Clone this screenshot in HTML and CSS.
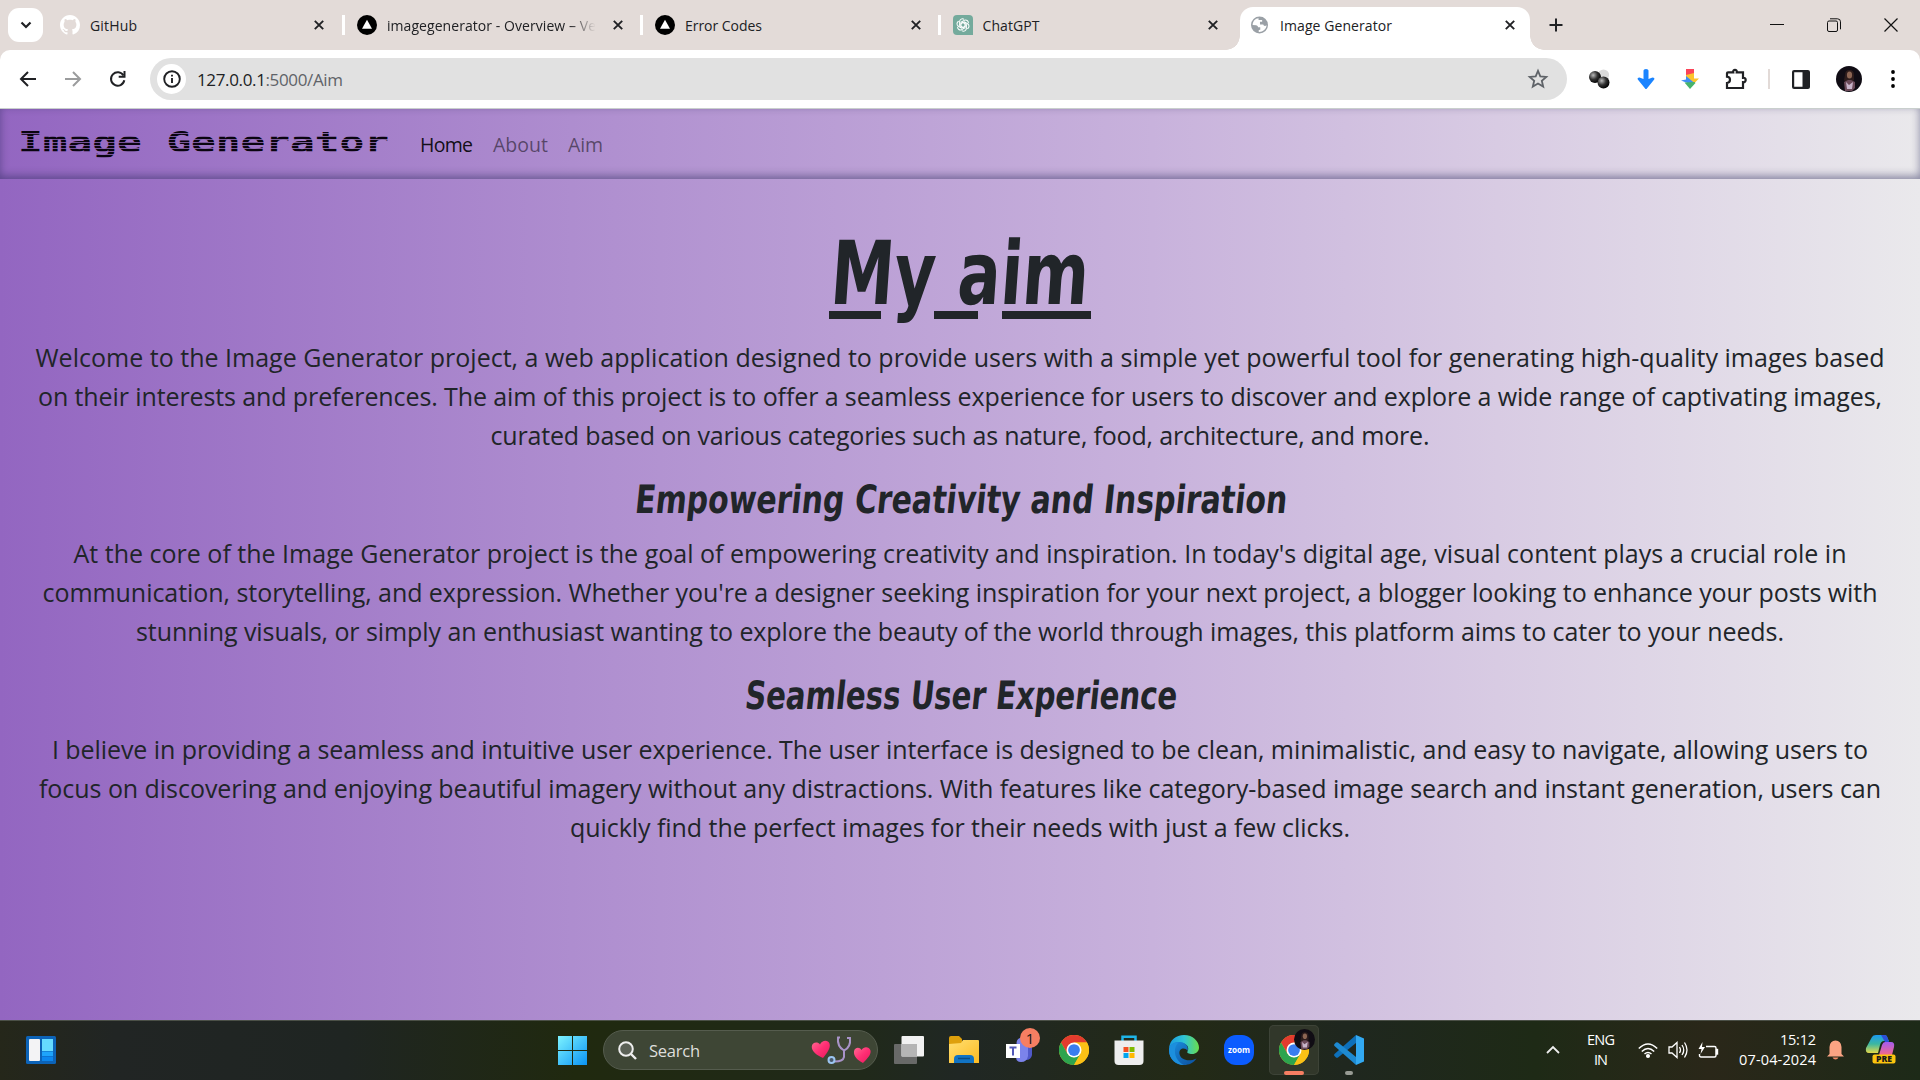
FILE: index.html
```html
<!DOCTYPE html>
<html lang="en">
<head>
<meta charset="utf-8">
<title>Image Generator</title>
<link rel="stylesheet" href="styles.css">
</head>
<body>
<svg width="0" height="0" class="defs">
  <defs>
    <pattern id="scan" width="8" height="3" patternUnits="userSpaceOnUse"><rect width="8" height="2" fill="#0a0510"/><rect y="2" width="8" height="1" fill="#0a0510" opacity=".25"/></pattern>
    <linearGradient id="win" x1="0" y1="0" x2="1" y2="1"><stop offset="0" stop-color="#7df3ff"/><stop offset="1" stop-color="#0a93f5"/></linearGradient>
    <linearGradient id="folder" x1="0" y1="0" x2="1" y2="1"><stop offset="0" stop-color="#ffdf72"/><stop offset="1" stop-color="#fdbb22"/></linearGradient>
    <linearGradient id="edgeA" x1="0" y1="0" x2="1" y2="0"><stop offset="0" stop-color="#1a9ae0"/><stop offset=".5" stop-color="#2fc4d6"/><stop offset="1" stop-color="#6ade4c"/></linearGradient>
    <linearGradient id="edgeB" x1="0" y1="0" x2="1" y2="1"><stop offset="0" stop-color="#1b8fdf"/><stop offset="1" stop-color="#0b4f9f"/></linearGradient>
    <linearGradient id="copA" x1="0" y1="0" x2="0" y2="1"><stop offset="0" stop-color="#1b9af0"/><stop offset=".5" stop-color="#3cb7a0"/><stop offset="1" stop-color="#e3d84a"/></linearGradient>
    <linearGradient id="copB" x1="0" y1="0" x2="0" y2="1"><stop offset="0" stop-color="#a45cf0"/><stop offset="1" stop-color="#f5688a"/></linearGradient>
    <linearGradient id="heart" x1="0" y1="0" x2="1" y2="1"><stop offset="0" stop-color="#ff6a92"/><stop offset=".5" stop-color="#ff2e74"/><stop offset="1" stop-color="#e81a5c"/></linearGradient>
    <radialGradient id="ball" cx=".35" cy=".35" r=".65"><stop offset="0" stop-color="#bbb"/><stop offset=".55" stop-color="#333"/><stop offset="1" stop-color="#050505"/></radialGradient>
    <symbol id="x" viewBox="0 0 12 12"><path d="M1.8 1.8l8.4 8.4M10.2 1.8l-8.4 8.4" stroke="#202124" stroke-width="1.9" fill="none"/></symbol>
    <symbol id="vercel" viewBox="0 0 20 20"><circle cx="10" cy="10" r="10"/><path d="M10 4.800l5 9H5z" fill="#fff"/></symbol>
    <symbol id="chrome" viewBox="0 0 48 48">
      <circle cx="24" cy="24" r="24" fill="#fbc116"/>
      <path d="M3.2 12A24 24 0 0 1 44.8 12H24L13.6 30z" fill="#e33b2e"/>
      <path d="M3.2 12A24 24 0 0 0 24 48L34.4 30 24 36 13.6 30z" fill="#2da44e"/>
      <path d="M44.8 12A24 24 0 0 1 24 48L34.4 30 34 18 24 12z" fill="#fbc116"/>
      <circle cx="24" cy="24" r="12" fill="#fff"/><circle cx="24" cy="24" r="9.4" fill="#3a7df0"/>
    </symbol>
    <symbol id="face" viewBox="0 0 26 26"><circle cx="13" cy="13" r="13" fill="#100c14"/><path d="M9 9q0-5 4.500-5t4.500 5v5l-2 3H10l-2-3z" fill="#2d1c1c"/><ellipse cx="13.500" cy="9" rx="2.600" ry="3.500" fill="#8c6553"/><path d="M8 16l4-2h3l4 2v6l-3 3H9z" fill="#6b4a59"/><path d="M10 16l3 3 4-3-1 7h-5z" fill="#c7b3c9"/></symbol>
  </defs>
</svg>

<header class="tabs">
  <div class="tab-search"><svg width="12" height="8" viewBox="0 0 12 8"><path d="M1.500 1.500L6 6l4.500-4.500" stroke="#202124" stroke-width="2.200" fill="none"/></svg></div>
  <div class="tab">
    <svg class="fav" viewBox="0 0 16 16"><path fill="#fff" d="M8 0C3.580 0 0 3.580 0 8c0 3.540 2.290 6.530 5.470 7.590.4.070.55-.17.55-.38 0-.19-.01-.82-.01-1.490-2.010.37-2.530-.49-2.690-.94-.09-.23-.48-.94-.82-1.130-.28-.15-.68-.52-.01-.53.63-.01 1.080.58 1.230.82.72 1.210 1.870.87 2.330.66.070-.52.28-.87.510-1.070-1.780-.2-3.640-.89-3.640-3.950 0-.87.310-1.590.82-2.150-.08-.2-.36-1.020.08-2.120 0 0 .67-.21 2.200.82.640-.18 1.320-.27 2-.27s1.360.09 2 .27c1.530-1.040 2.200-.82 2.200-.82.440 1.100.160 1.920.080 2.120.510.560.820 1.270.820 2.150 0 3.070-1.870 3.750-3.650 3.950.290.250.540.730.540 1.480 0 1.070-.01 1.930-.01 2.200 0 .21.150.460.550.380A8 8 0 0 0 16 8c0-4.420-3.580-8-8-8z"/></svg>
    <span class="tab-title"><span data-w="47">GitHub</span></span><svg class="close"><use href="#x"/></svg>
  </div>
  <div class="tab ruled">
    <svg class="fav"><use href="#vercel"/></svg>
    <span class="tab-title fade"><span data-w="209">imagegenerator - Overview – Ve</span></span><svg class="close"><use href="#x"/></svg>
  </div>
  <div class="tab ruled">
    <svg class="fav"><use href="#vercel"/></svg>
    <span class="tab-title"><span data-w="77">Error Codes</span></span><svg class="close"><use href="#x"/></svg>
  </div>
  <div class="tab ruled">
    <svg class="fav" viewBox="0 0 20 20"><path d="M4 0h12a4 4 0 0 1 4 4v16H4a4 4 0 0 1-4-4V4a4 4 0 0 1 4-4z" fill="#74aa9c"/><g fill="none" stroke="#fff" stroke-width="1.050"><path id="petal" d="M8 12.800V7.300l3.200-1.900a2.800 2.800 0 0 1 4.200 2.800"/><use href="#petal" transform="rotate(60 10 10)"/><use href="#petal" transform="rotate(120 10 10)"/><use href="#petal" transform="rotate(180 10 10)"/><use href="#petal" transform="rotate(240 10 10)"/><use href="#petal" transform="rotate(300 10 10)"/></g></svg>
    <span class="tab-title"><span data-w="57">ChatGPT</span></span><svg class="close"><use href="#x"/></svg>
  </div>
  <div class="tab active">
    <svg class="fav globe" viewBox="0 0 18 18"><circle cx="9" cy="9" r="9" fill="#9aa0a6"/><path d="M8 1.800C4.500 2 1.800 5 1.700 9l3.800.2q2 .2 2 2.300h2.300V14l-1.600.3v2c4.300.2 8-2.800 8.300-7-1.500 1.200-3.300.8-3.500-.8H9.500V5.500h2.300V3.800H8z" fill="#fff"/></svg>
    <span class="tab-title"><span data-w="112">Image Generator</span></span><svg class="close"><use href="#x"/></svg>
  </div>
  <svg class="plus" width="14" height="14" viewBox="0 0 14 14"><path d="M7 .5v13M.5 7h13" stroke="#202124" stroke-width="2"/></svg>
  <div class="window-buttons">
    <svg width="14" height="14"><path d="M0 6.500h14" stroke="#111"/></svg>
    <svg width="14" height="14" fill="none" stroke="#111"><rect x=".5" y="3" width="10" height="10.500" rx="1.500"/><path d="M3 .8h7.500a3 3 0 0 1 3 3v7.500"/></svg>
    <svg width="14" height="14" stroke="#111" stroke-width="1.200"><path d="M.5.5l13 13M13.500.5l-13 13"/></svg>
  </div>
</header>

<div class="toolbar">
  <div class="nav-icons">
    <svg width="18" height="18" viewBox="0 0 18 18" fill="none" stroke="#202124" stroke-width="2"><path d="M17 9H2.500M9 2L2 9l7 7"/></svg>
    <svg width="18" height="18" viewBox="0 0 18 18" fill="none" stroke="#9b9c9d" stroke-width="2"><path d="M1 9h14.500M9 2l7 7-7 7"/></svg>
    <svg width="18" height="18" viewBox="0 0 18 18" fill="none" stroke="#202124" stroke-width="2"><path d="M14.500 5.600A6.700 6.700 0 1 0 15.300 10.300"/><path d="M15.500 1v5.800H9.700"/></svg>
  </div>
  <div class="omnibox">
    <div class="site-info"><svg width="18" height="18" viewBox="0 0 18 18" fill="none" stroke="#202124" stroke-width="1.900"><circle cx="9" cy="9" r="7.800"/><path d="M9 8v5M9 4.700v1.900"/></svg></div>
    <span class="url" data-w="146">127.0.0.1<i>:5000/Aim</i></span>
    <svg class="star" width="20" height="20" viewBox="0 0 20 20"><path d="M10 1.900l2.300 5.500 6 .5-4.500 3.900 1.400 5.800-5.200-3.100-5.200 3.100 1.400-5.800L1.700 7.900l6-.5z" fill="none" stroke="#5f6368" stroke-width="1.800"/></svg>
  </div>
  <div class="extensions">
    <svg width="22" height="20" viewBox="0 0 22 20"><circle cx="14.500" cy="6" r="5.600" fill="#d9d9d9"/><circle cx="6" cy="8" r="6" fill="url(#ball)"/><circle cx="14.500" cy="13.500" r="6" fill="url(#ball)"/></svg>
    <svg width="18" height="20" viewBox="0 0 18 20"><path d="M6.500 1.500q0-1.500 2.500-1.500t2.500 1.500V10l4-1.500q2.500 0 1.700 2L9.500 20h-1L.8 10.500q-.8-2 1.700-2l4 1.500z" fill="#1b84ff"/></svg>
    <svg width="18" height="20" viewBox="0 0 18 20"><path d="M5 0h8v5l-8 2z" fill="#fb4458"/><path d="M5 6l8-2v5.500h5L13.500 14 5 9z" fill="#fcc42c"/><path d="M5 7l8.500 7L9 15 0 11.500l5-1z" fill="#3f8df5"/><path d="M3.500 13.500L13.500 13l1 1L9 20z" fill="#47b36b"/></svg>
    <svg width="22" height="22" viewBox="0 0 22 22"><path d="M3 4.300h5.200C7.500 1 12.500 1 11.800 4.300H18v5.500c3.600-.5 3.600 4.900 0 4.400V20H2v-5c4-.4 4-6 0-6.300V5.300q0-1 1-1z" fill="none" stroke="#202124" stroke-width="2.200"/></svg>
    <b></b>
    <svg width="18" height="19" viewBox="0 0 18 19"><rect x="1.100" y="1.100" width="15.800" height="16.800" rx="1" fill="none" stroke="#202124" stroke-width="2.200"/><path d="M10.500 1h6.500v17h-6.500z" fill="#202124"/></svg>
    <svg width="26" height="26"><use href="#face"/></svg>
    <svg width="4" height="18" viewBox="0 0 4 18"><circle cx="2" cy="2" r="1.900"/><circle cx="2" cy="9" r="1.900"/><circle cx="2" cy="16" r="1.900"/></svg>
  </div>
</div>

<div class="page">
  <nav class="navbar">
    <svg class="brand" width="376" height="50"><text x="-1" y="33" textLength="371" lengthAdjust="spacingAndGlyphs" fill="url(#scan)">Image Generator</text></svg>
    <div class="links"><div class="on"><a data-w="53">Home</a></div><div><a data-w="55">About</a></div><div><a data-w="35">Aim</a></div></div>
  </nav>
  <main>
    <svg class="title" width="300" height="159" viewBox="-15 0 300 159">
      <text transform="translate(4 125) skewX(-4)" textLength="258" lengthAdjust="spacingAndGlyphs">My aim</text>
      <path d="M4 132h52v8H4zM109 132h44v8h-44zM177 132h89v8h-89z" fill="#212529"/>
    </svg>
    <p><span data-w="1849">Welcome to the Image Generator project, a web application designed to provide users with a simple yet powerful tool for generating high-quality images based</span>
    <span data-w="1844">on their interests and preferences. The aim of this project is to offer a seamless experience for users to discover and explore a wide range of captivating images,</span>
    <span data-w="939">curated based on various categories such as nature, food, architecture, and more.</span></p>
    <svg class="sub" width="700" height="78"><text transform="translate(24 57) skewX(-6)" textLength="652" lengthAdjust="spacingAndGlyphs">Empowering Creativity and Inspiration</text></svg>
    <p><span data-w="1773">At the core of the Image Generator project is the goal of empowering creativity and inspiration. In today's digital age, visual content plays a crucial role in</span>
    <span data-w="1835">communication, storytelling, and expression. Whether you're a designer seeking inspiration for your next project, a blogger looking to enhance your posts with</span>
    <span data-w="1648">stunning visuals, or simply an enthusiast wanting to explore the beauty of the world through images, this platform aims to cater to your needs.</span></p>
    <svg class="sub" width="700" height="78"><text transform="translate(134 57) skewX(-6)" textLength="432" lengthAdjust="spacingAndGlyphs">Seamless User Experience</text></svg>
    <p><span data-w="1816">I believe in providing a seamless and intuitive user experience. The user interface is designed to be clean, minimalistic, and easy to navigate, allowing users to</span>
    <span data-w="1842">focus on discovering and enjoying beautiful imagery without any distractions. With features like category-based image search and instant generation, users can</span>
    <span data-w="780">quickly find the perfect images for their needs with just a few clicks.</span></p>
  </main>
</div>

<footer class="taskbar">
  <div class="widgets"><svg width="30" height="28" viewBox="0 0 30 28"><rect width="30" height="28" rx="1.500" fill="#0c63b8"/><rect x="3" y="3" width="11" height="22" rx="1" fill="#f3f3f5"/><path d="M16 3h11v12H16z" fill="#66dbff"/><path d="M16 15.500h11v4.500H16z" fill="#1ea4fb"/><path d="M16 20.500h11V25H16z" fill="#0c86ee"/></svg></div>
  <div class="apps">
    <svg class="start" width="29" height="29"><path d="M0 0h14v14H0zM15 0h14v14H15zM0 15h14v14H0zM15 15h14v14H15z" fill="url(#win)"/></svg>
    <div class="search">
      <svg width="19" height="19" viewBox="0 0 19 19"><circle cx="8" cy="8" r="6.800" fill="#5b6156" stroke="#eee" stroke-width="2"/><path d="M13 13l5 5" stroke="#eee" stroke-width="2.400"/></svg>
      <div class="search-label"><span data-w="51">Search</span></div>
      <svg width="62" height="30" viewBox="0 0 62 30"><path d="M12 23C5 20 .5 16 .8 11.500 1 7.500 6.500 6 9 9.500 11 5 17 4.500 18.500 8.500 20 13 16 18 12 23z" fill="url(#heart)"/><path d="M52 28C46 25 42.500 21 43 16.500c.5-4 5.500-5 7.500-1.500C53 11 58 11.500 59.500 15.500 60.500 19.500 56 24 52 28z" fill="url(#heart)"/><path d="M29 2.500h-2q-1 9 6 13 7-3 6-12.500h-3M33 15v7q-1 4.500-9 4.500" fill="none" stroke="#a893c8" stroke-width="2"/><circle cx="20.500" cy="25" r="3" fill="#48586a" stroke="#9cc6f2" stroke-width="2"/></svg>
    </div>
    <div class="icons">
      <div><svg width="30" height="28"><rect x="0" y="8" width="23" height="20" rx="1" fill="#686968"/><rect x="7.500" width="22.500" height="20.500" rx="1" fill="#f2f2f2"/><rect x="7.500" y="8" width="15.500" height="12.500" fill="#b5b5b5"/></svg></div>
      <div><svg width="30" height="28"><path d="M0 2q0-2 2-2h8l3 3v6H0z" fill="#dea00c"/><path d="M0 8l12-1 2-3h15q1 0 1 1v22H0z" fill="url(#folder)"/><path d="M5 27v-4q0-4 4-4h12q4 0 4 4v4z" fill="#1173c4"/><path d="M9 22.500h12" stroke="#0b4c85" stroke-width="1.500"/></svg></div>
      <div class="badge"><svg width="30" height="30" viewBox="0 0 30 30"><circle cx="18" cy="8" r="5.500" fill="#7b83eb"/><path d="M20 10h8v10q-1 5-6 5z" fill="#5059c9"/><path d="M12 10h12v11q-1 6-7 6-5 0-5-5z" fill="#7b83eb"/><rect x="2" y="9" width="14" height="14" fill="#fff"/><path d="M5.500 12.500h7M9 12.500v8" stroke="#5158b8" stroke-width="2"/></svg><span>1</span></div>
      <div><svg width="30" height="30"><use href="#chrome"/></svg></div>
      <div><svg width="30" height="30"><path d="M8.500 6V1.800h13V6" fill="none" stroke="#1eb5e8" stroke-width="2.500"/><path d="M.5 5.500h29V26q0 4-4 4h-21q-4 0-4-4z" fill="#eee"/><path fill="#f25022" d="M9.500 12h5v5h-5z"/><path fill="#7fba00" d="M15.500 12h5v5h-5z"/><path fill="#00a4ef" d="M9.500 18h5v5h-5z"/><path fill="#ffb900" d="M15.500 18h5v5h-5z"/></svg></div>
      <div><svg width="30" height="30" viewBox="0 0 30 30"><path d="M0 13C1 5 7 0 15 0c9 0 15 6.500 15 12.500 0 4-3 6.500-7 6.500-3 0-5.500-1-4.500-2.500C21 12 17 8 12 8 6 8 1.500 10 0 13z" fill="url(#edgeA)"/><path d="M0 15C0 9 6 6.500 11 7c6 .5 9 5 7.500 9-2-4-9-3-8 3 .8 5.500 9 8.500 17 4.500C24.500 28 20 30 15 30 7 30 0 24 0 15z" fill="url(#edgeB)"/><path d="M0 15C0 9 6 7 10 7.500 4 11 4 25 15 30 7 30 0 24 0 15z" fill="#1c8fdd"/></svg></div>
      <div><svg width="30" height="30"><rect width="30" height="30" rx="12" fill="#0b5cff"/><text x="4" y="18" textLength="22" lengthAdjust="spacingAndGlyphs" class="zoom">zoom</text></svg></div>
      <div class="current"><svg width="30" height="30"><use href="#chrome"/></svg><svg class="who" width="21" height="21"><use href="#face"/></svg></div>
      <div class="open"><svg width="30" height="30" viewBox="0 0 30 30"><path d="M22 0l8 3.500v23L22 30z" fill="#32a9f2"/><path d="M22 0v8L4 22.500q-1 .5-2 0L.5 21q-1-1 0-2z" fill="#0e70ba"/><path d="M22 30v-8L4 7.500q-1-.5-2 0L.5 9q-1 1 0 2z" fill="#1e8ad2"/></svg></div>
    </div>
  </div>
  <div class="tray">
    <svg class="chev" width="14" height="8"><path d="M1 7l6-6 6 6" fill="none" stroke="#eee" stroke-width="1.800"/></svg>
    <div class="lang"><span data-w="28">ENG</span><span data-w="14">IN</span></div>
    <div class="status">
      <svg width="20" height="15" viewBox="0 0 20 15" fill="none" stroke="#fff" stroke-width="1.500"><path d="M.8 5.500Q10-3.500 19.200 5.500M3.800 8.500q6.200-6 12.400 0M6.500 11q3.500-3 7 0"/><circle cx="10" cy="13" r="1.300" fill="#fff"/></svg>
      <svg width="20" height="18" viewBox="0 0 20 18" fill="none" stroke="#fff" stroke-width="1.300"><path d="M1 6h3l5-4.500v15L4 12H1zM11.500 6q2 3 0 6M14 4q3.500 5 0 10M16.500 1.500q5 7.500 0 15"/></svg>
      <svg width="21" height="17" viewBox="0 0 21 17" fill="none" stroke="#fff" stroke-width="1.400"><path d="M8 4.500h8.500q1.500 0 1.500 1.500v7.500q0 1.500-1.500 1.500H3q-1.500 0-1.500-1.500V12"/><path d="M18.500 7.500h1v4.500h-1z" fill="#fff"/><path d="M4.500 0L.5 7h3l-1 5L7 5H4z" fill="#fff" stroke="none"/></svg>
    </div>
    <div class="clock"><span data-w="36">15:12</span><span data-w="77">07-04-2024</span></div>
    <svg class="bell" width="17" height="20" viewBox="0 0 17 20"><path d="M2.500 14V7q.5-6.500 6-6.500t6 6.500v7l2.500 2.500H0z" fill="#fba483"/><path d="M5.500 17.500h6q-1 2-3 2t-3-2z" fill="#f28b66"/></svg>
    <svg class="copilot" width="30" height="30" viewBox="0 0 30 30"><path d="M6 2q1-2 4-2h8q3 0 3.500 3L23 6h-5q-3 0-4 4l-2 8H3q-4 0-3-5z" fill="url(#copA)"/><path d="M15 0h4q2 0 3 4l1 3h-4z" fill="#2c50d8"/><path d="M19 7h6q4 0 3 5l-2 8H13l3-10q1-3 3-3z" fill="url(#copB)"/><rect x="6.500" y="19.500" width="23" height="9" rx="2" fill="#fcc40e"/><text x="10" y="27.300" textLength="16" lengthAdjust="spacingAndGlyphs" class="pre">PRE</text></svg>
  </div>
</footer>
<script src="fit.js"></script>
</body>
</html>
```
FILE: styles.css
```css
* { box-sizing: border-box; }
body { margin: 0; width: 1920px; height: 1080px; overflow: hidden; display: flex; flex-direction: column; background: #e3dbd8; font-family: "Open Sans", "Noto Sans", sans-serif; color: #202124; }
svg { display: block; flex: none; overflow: visible; }
.defs { position: absolute; }
[data-w] { white-space: nowrap; display: inline-block; }

.tabs { height: 50px; flex: none; display: flex; align-items: center; padding-left: 8px; font-size: 14px; }
.tab-search { width: 35px; height: 34px; border-radius: 11px; background: #fff; display: grid; place-items: center; }
.tab { position: relative; width: 298px; height: 43px; margin-top: 7px; padding: 0 15px 7px 16px; display: flex; align-items: center; gap: 10px; flex: none; }
.tab:nth-child(2) { padding: 0 16px 7px 17px; }
.tab:nth-child(4), .tab:nth-child(5) { width: 297.500px; }
.ruled { background: linear-gradient(#fff, #fff) 1px 8px / 3px 20px no-repeat; }
.fav { width: 20px; height: 20px; }
.globe { width: 17px; height: 18px; }
.tab-title { flex: 1; overflow: hidden; white-space: nowrap; line-height: 22px; padding-top: 1px; }
.fade { -webkit-mask: linear-gradient(90deg, #000 85%, transparent 97%); mask: linear-gradient(90deg, #000 85%, transparent 97%); }
.close { width: 12px; height: 12px; }
.tab.active { width: 290px; background: #fff; border-radius: 13px 13px 0 0; margin-left: 6px; padding: 0 14px 7px 11px; gap: 12px; }
.tab.active::before, .tab.active::after { content: ""; position: absolute; bottom: 0; width: 14px; height: 14px; }
.tab.active::before { left: -14px; background: radial-gradient(circle at 0 0, transparent 13.500px, #fff 14px); }
.tab.active::after { right: -14px; background: radial-gradient(circle at 100% 0, transparent 13.500px, #fff 14px); }
.plus { margin-left: 19px; }
.window-buttons { margin-left: auto; padding-right: 22px; display: flex; gap: 43px; }

.toolbar { height: 59px; flex: none; background: #fff; border-radius: 10px 10px 0 0; border-bottom: 1px solid #c9cfcd; display: flex; align-items: center; }
.nav-icons { width: 150px; padding-left: 19px; display: flex; gap: 27px; }
.omnibox { width: 1417px; height: 42px; border-radius: 21px; background: #e1e1e1; display: flex; align-items: center; padding: 0 19px 0 7px; }
.site-info { width: 29px; height: 30px; border-radius: 50%; background: #fff; display: grid; place-items: center; }
.url { margin-left: 11px; font-size: 17px; }
.url i { font-style: normal; color: #5f6368; }
.star { margin-left: auto; }
.extensions { margin-left: 22px; display: flex; align-items: center; gap: 26px; }
.extensions b { width: 2px; height: 20px; background: #e2dad7; margin: 0 -4px 0 -5px; }
.extensions svg:nth-of-type(6) { margin-right: -2px; }
.extensions svg:nth-of-type(7) { margin-left: -2px; }
.extensions svg:last-child { margin-left: 5px; }

.page { height: 911px; flex: none; background: linear-gradient(90deg, #9366c1 0%, #b090d0 32%, #c8b2dc 60%, #d8cbe3 78%, #eae9ec 100%); color: #212529; }
.navbar { height: 70px; padding-left: 19px; display: flex; align-items: center; box-shadow: inset 0 -3px 9px rgba(40, 40, 90, .5); font-size: 19.500px; }
.brand { margin-right: 25px; }
.brand text { font: bold 29px "DejaVu Sans Mono", monospace; }
.links { display: flex; gap: 20px; color: rgba(0, 0, 0, .5); }
.links .on { color: rgba(0, 0, 0, .9); }
main { display: flex; flex-direction: column; align-items: center; }
.title text { font: bold 88px "DejaVu Sans Condensed", "DejaVu Sans", sans-serif; fill: #212529; }
.sub text { font: bold 39px "DejaVu Sans Condensed", "DejaVu Sans", sans-serif; fill: #212529; }
p { margin: 0; font-size: 25px; line-height: 39.200px; height: 118px; display: flex; flex-direction: column; align-items: center; }

.taskbar { height: 60px; flex: none; display: flex; align-items: center; border-top: 1px solid #4b5047; padding-bottom: 1px; background: linear-gradient(90deg, #25271a 0, #212524 6%, #1f2522 18%, #20290f 30%, #20291a 45%, #202724 50%, #232a16 62%, #1f271f 70%, #1e2a16 80%, #2a2719 89%, #1d2a18 100%); color: #fff; }
.widgets { width: 558px; padding-left: 26px; }
.apps { display: flex; align-items: center; }
.search { width: 275px; height: 40px; margin: 0 6px 0 16px; border-radius: 20px; background: #3e4635; border: 1px solid #555c4e; display: flex; align-items: center; padding: 0 4px 0 14px; font-size: 16.500px; color: #dedfdc; }
.search-label { margin: 0 auto 0 12px; }
.icons { display: flex; }
.icons > div { position: relative; width: 50px; height: 50px; margin-right: 5px; border-radius: 5px; display: grid; place-items: center; }
.badge span { position: absolute; left: 26px; top: 3px; width: 20px; height: 20px; border-radius: 50%; background: #f67e62; color: #151515; font-size: 15px; line-height: 20px; text-align: center; }
.current { background: #31372a; box-shadow: inset 0 0 0 1px #3d4337; }
.current::after, .open::after { content: ""; position: absolute; bottom: 0; width: 20px; height: 4px; border-radius: 2px; background: #f67e62; }
.open::after { width: 8px; background: #989b94; }
.who { position: absolute; left: 25px; top: 4px; }
.zoom { font: bold 9px "Open Sans", sans-serif; fill: #fff; }
.pre { font: 800 8px "Open Sans", sans-serif; fill: #1a1a1a; }
.tray { margin-left: auto; padding-right: 24px; display: flex; align-items: center; font-size: 14.500px; line-height: 20px; }
.lang, .clock { display: flex; flex-direction: column; align-items: center; }
.lang { margin: 0 23px 0 27px; }
.status { display: flex; align-items: center; gap: 10px; }
.clock { align-items: flex-end; margin: 0 11px 0 20px; }
.copilot { margin-left: 22px; }
```
FILE: fit.js
```js
// Tracks each label so that it fills the width given in data-w.
document.querySelectorAll('[data-w]').forEach(function (el) {
  var n = el.textContent.length;
  var gap = (parseFloat(el.dataset.w) - el.getBoundingClientRect().width) / (n - 1);
  el.style.letterSpacing = gap.toFixed(4) + 'px';
  el.style.marginRight = -gap.toFixed(4) + 'px';
});
```
